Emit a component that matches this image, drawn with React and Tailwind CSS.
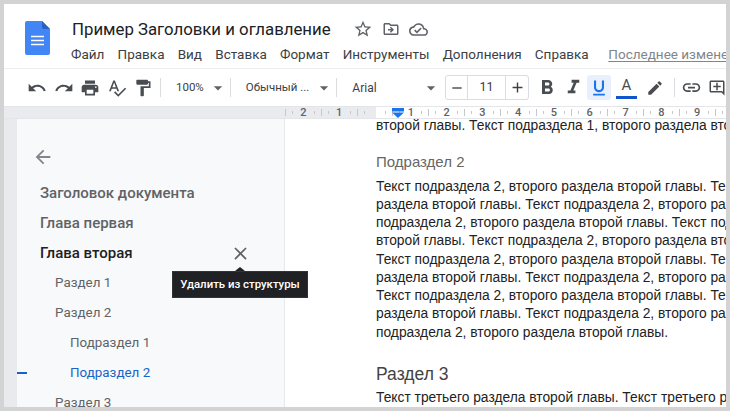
import React from "react";
import {
  MdUndo, MdRedo, MdPrint, MdSpellcheck, MdFormatPaint, MdArrowDropDown, MdRemove, MdAdd,
  MdFormatBold, MdFormatItalic, MdFormatUnderlined, MdLink, MdOutlineAddComment, MdStarBorder,
  MdOutlineDriveFileMove, MdOutlineCloudDone, MdArrowBack, MdClose, MdEdit,
} from "react-icons/md";

const menu = ["Файл", "Правка", "Вид", "Вставка", "Формат", "Инструменты", "Дополнения", "Справка"];

function DocLogo() {
  return (
    <svg width="25" height="34" viewBox="0 0 25 34" className="shrink-0">
      <path d="M2 0h15l8 8v24a2 2 0 0 1-2 2H2a2 2 0 0 1-2-2V2a2 2 0 0 1 2-2z" fill="#4285f4" />
      <path d="M17 0l8 8h-6a2 2 0 0 1-2-2z" fill="#2a5fc4" />
      <path d="M6 15.5h13M6 19.5h13M6 23.5h13" stroke="#fff" strokeWidth="1.6" />
    </svg>
  );
}

function Divider() {
  return <div className="h-[19px] w-px bg-[#dadce0] shrink-0" />;
}

function Tool({ icon: Icon, size = 20, w = 26.75 }) {
  return (
    <div className="h-6 flex items-center justify-center shrink-0 text-[#494c50]" style={{ width: w }}>
      <Icon size={size} />
    </div>
  );
}

function RulerCell({ n }) {
  return (
    <div className="w-[35.8px] shrink-0 flex items-center justify-between text-[11px] leading-none text-[#5f6368] font-medium">
      <span className="w-px h-[7px] bg-[#c4c7cb]" />
      <span className="w-px h-[3px] bg-[#c4c7cb]" />
      <span className="w-[9px] text-center">{n}</span>
      <span className="w-px h-[3px] bg-[#c4c7cb]" />
      <span className="w-0" />
    </div>
  );
}

function Navline({ children, className = "" }) {
  return <div className={"h-[30px] flex items-center whitespace-nowrap " + className}>{children}</div>;
}

const bodyLines = [
  "Текст подраздела 2, второго раздела второй главы. Текст",
  "раздела второй главы. Текст подраздела 2, второго раздела",
  "подраздела 2, второго раздела второй главы. Текст подраздела",
  "второй главы. Текст подраздела 2, второго раздела второй",
  "Текст подраздела 2, второго раздела второй главы. Текст",
  "раздела второй главы. Текст подраздела 2, второго раздела",
  "Текст подраздела 2, второго раздела второй главы. Текст",
  "раздела второй главы. Текст подраздела 2, второго раздела",
  "подраздела 2, второго раздела второй главы.",
];

export default function App() {
  return (
    <div className="w-[730px] h-[411px] bg-[#d3d3d3] p-[4px] overflow-hidden font-['Roboto',sans-serif]">
      <div className="w-[722px] h-[403px] bg-white flex flex-col overflow-hidden">
        {/* header */}
        <div className="h-[65px] shrink-0 flex items-start pl-[21px] pt-[17px] border-b border-[#eceef0]">
          <DocLogo />
          <div className="ml-[22px] -mt-[4px] min-w-0 flex-1">
            <div className="flex items-center h-[24px]">
              <span className="text-[16.8px] leading-[24px] text-[#202124] whitespace-nowrap">Пример Заголовки и оглавление</span>
              <div className="flex items-center ml-[22px] gap-[9px] text-[#5f6368]">
                <MdStarBorder size={20} />
                <MdOutlineDriveFileMove size={18} />
                <MdOutlineCloudDone size={19} />
              </div>
            </div>
            <div className="flex items-center mt-[3px] -ml-[1px] text-[13.5px] leading-[20px] text-[#3c4043] whitespace-nowrap">
              {menu.map((m) => (
                <span key={m} className="mr-[13.2px]">{m}</span>
              ))}
              <span className="ml-[6.5px] text-[#80868b] underline underline-offset-2">Последнее изменение</span>
            </div>
          </div>
        </div>
        {/* toolbar */}
        <div className="h-[37px] shrink-0 flex items-center pl-[19.5px]">
          <Tool icon={MdUndo} />
          <Tool icon={MdRedo} />
          <Tool icon={MdPrint} />
          <Tool icon={MdSpellcheck} />
          <Tool icon={MdFormatPaint} w={25} />
          <div className="w-[4.5px]" />
          <Divider />
          <div className="w-[44px] flex items-center ml-[15px] text-[11.5px] text-[#3c4043]">
            <span>100%</span>
            <span className="ml-auto text-[#5f6368] -mr-[8px]"><MdArrowDropDown size={20} /></span>
          </div>
          <div className="w-[10px]" />
          <Divider />
          <div className="w-[81px] flex items-center ml-[15px] text-[11.5px] text-[#3c4043] whitespace-nowrap">
            <span>Обычный ...</span>
            <span className="ml-auto text-[#5f6368] -mr-[8px]"><MdArrowDropDown size={20} /></span>
          </div>
          <div className="w-[10px]" />
          <Divider />
          <div className="w-[84px] flex items-center ml-[15px] text-[12px] text-[#3c4043]">
            <span>Arial</span>
            <span className="ml-auto text-[#5f6368] -mr-[5px]"><MdArrowDropDown size={20} /></span>
          </div>
          <div className="ml-[9px] w-[84px] h-[25px] shrink-0 border border-[#dadce0] rounded-[3px] flex items-center text-[#3c4043]">
            <div className="w-[22px] h-full flex items-center justify-center border-r border-[#dadce0]"><MdRemove size={16} /></div>
            <div className="flex-1 text-center text-[12.5px]">11</div>
            <div className="w-[23px] h-full flex items-center justify-center border-l border-[#dadce0]"><MdAdd size={17} /></div>
          </div>
          <div className="w-[4px]" />
          <Tool icon={MdFormatBold} size={24} w={27} />
          <Tool icon={MdFormatItalic} size={23} w={26} />
          <div className="w-[24px] h-[25px] ml-px shrink-0 rounded-[3px] bg-[#e8f0fe] text-[#1a73e8] flex items-center justify-center">
            <MdFormatUnderlined size={20} />
          </div>
          <div className="w-[21px] h-[25px] ml-[5px] shrink-0 flex flex-col items-center text-[#494c50]">
            <span className="text-[15px] leading-[20px] font-normal">A</span>
            <span className="w-[21px] h-[3px] bg-[#1155cc] mt-[1px]" />
          </div>
          <Tool icon={MdEdit} size={18} w={35} />
          <div className="w-[2px]" />
          <Divider />
          <Tool icon={MdLink} size={21} w={33} />
          <Tool icon={MdOutlineAddComment} size={20} w={18} />
        </div>
        {/* ruler */}
        <div className="relative h-[13px] shrink-0 flex items-center pl-[281px] overflow-hidden bg-[linear-gradient(90deg,#e9ebee_372px,#fff_372px)] border-y border-[#e3e5e8]">
          <RulerCell n="2" />
          <RulerCell n="1" />
          <RulerCell n="" />
          {[1, 2, 3, 4, 5, 6, 7, 8, 9, 10].map((n) => (
            <RulerCell key={n} n={n} />
          ))}
          <svg width="12" height="10" viewBox="0 0 12 10" className="absolute left-[388px] top-[1px]">
            <path d="M0 0h12v3.5H0z" fill="#1a73e8" />
            <path d="M0 4.5h12L6 10z" fill="#1a73e8" />
          </svg>
        </div>
        {/* main */}
        <div className="relative flex-1 min-h-0 flex overflow-hidden">
          <div className="w-[13px] shrink-0 bg-[#e8eaed]" />
          <div className="w-[268px] shrink-0 bg-[#f8f9fa] border-r border-[#e6e8eb] overflow-hidden">
            <div className="pl-[15px] pt-[27px] text-[#80868b]"><MdArrowBack size={22} /></div>
            <div className="mt-[10px]">
              <Navline className="pl-[23px] text-[15px] font-medium text-[#5f6368]">Заголовок документа</Navline>
              <Navline className="pl-[23px] text-[15px] font-medium text-[#5f6368]">Глава первая</Navline>
              <Navline className="pl-[23px] pr-[33px] justify-between text-[15px] font-medium text-[#202124]">
                <span>Глава вторая</span>
                <MdClose size={21} className="text-[#5f6368]" />
              </Navline>
              <Navline className="pl-[38px] text-[13.4px] text-[#5f6368]">Раздел 1</Navline>
              <Navline className="pl-[38px] text-[13.4px] text-[#5f6368]">Раздел 2</Navline>
              <Navline className="pl-[53px] text-[13.4px] text-[#5f6368]">Подраздел 1</Navline>
              <Navline className="text-[13.4px] text-[#1a62c9]">
                <span className="w-[10px] h-[2px] bg-[#1a62c9] mr-[43px]" />
                Подраздел 2
              </Navline>
              <Navline className="pl-[38px] text-[13.4px] text-[#5f6368]">Раздел 3</Navline>
            </div>
          </div>
          <div className="flex-1 min-w-0 overflow-hidden pl-[91px] font-['Liberation_Sans',sans-serif] text-[13.8px] leading-[18.25px] text-[#222] whitespace-nowrap">
            <div className="h-[14px] leading-[14px]">второй главы. Текст подраздела 1, второго раздела второй</div>
            <div className="mt-[19px] text-[15px] leading-[20px] text-[#666]">Подраздел 2</div>
            <div className="mt-[5.5px]">
              {bodyLines.map((l, i) => (
                <div key={i}>{l}</div>
              ))}
            </div>
            <div className="mt-[20px] text-[17.5px] leading-[24px] text-[#434343]">Раздел 3</div>
            <div className="mt-[3px]">Текст третьего раздела второй главы. Текст третьего раздела</div>
          </div>
          <div className="absolute left-[168px] top-[152px] w-[136px] h-[27px] bg-[#202124] text-white text-[11.4px] font-medium flex items-center justify-center border border-[#333] whitespace-nowrap">
            <span className="absolute -top-[5px] left-[62px] w-0 h-0 border-x-[5px] border-x-transparent border-b-[4px] border-b-[#202124]" />
            Удалить из структуры
          </div>
        </div>
      </div>
    </div>
  );
}
